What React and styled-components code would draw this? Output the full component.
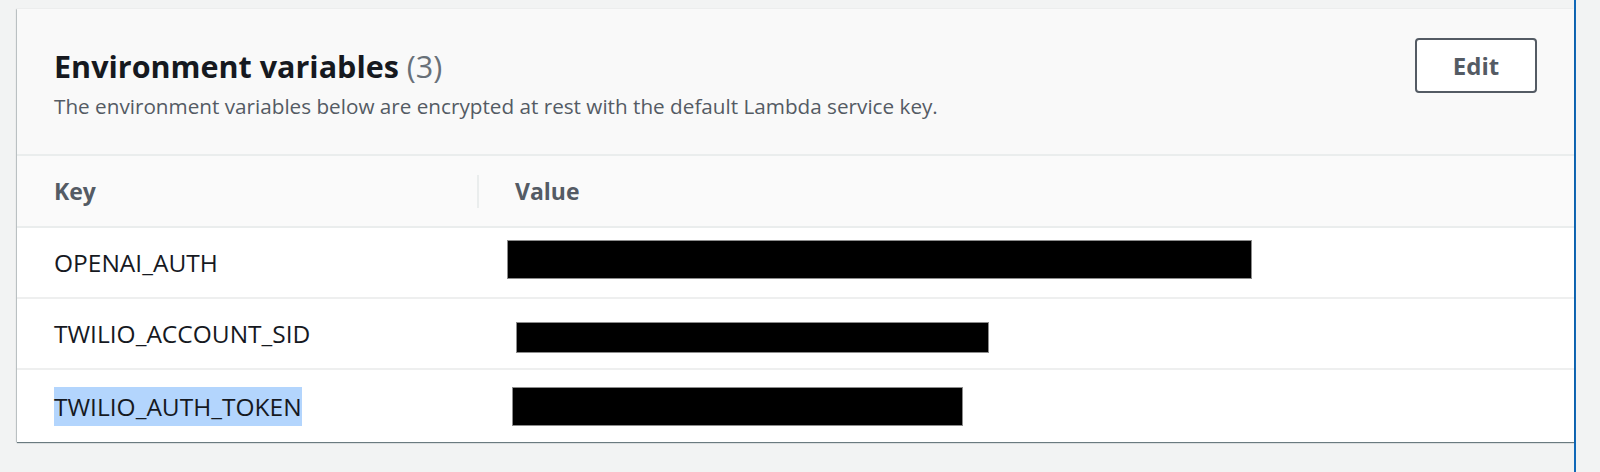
import React from 'react'
import styled, { createGlobalStyle } from 'styled-components'

const GlobalStyle = createGlobalStyle`
  html, body {
    margin: 0;
    padding: 0;
    background: #f2f3f3;
    font-family: "Open Sans", "Noto Sans", sans-serif;
  }
`

const rows = [
  { key: 'OPENAI_AUTH', bar: { left: 0, top: 12, width: 745, height: 39 } },
  { key: 'TWILIO_ACCOUNT_SID', bar: { left: 9, top: 23, width: 473, height: 31 } },
  { key: 'TWILIO_AUTH_TOKEN', bar: { left: 5, top: 17, width: 451, height: 39 }, selected: true },
]

function App() {
  return (
    <>
      <GlobalStyle />
      <Page>
        <Panel>
          <Card>
            <Header>
              <HeaderText>
                <Title>
                  Environment variables <Count>(3)</Count>
                </Title>
                <Description>
                  The environment variables below are encrypted at rest with the default Lambda service key.
                </Description>
              </HeaderText>
              <EditButton>Edit</EditButton>
            </Header>
            <Table>
              <HeadRow>
                <KeyCell>
                  <HeadLabel>Key</HeadLabel>
                </KeyCell>
                <Divider />
                <ValueCell $head>
                  <HeadLabel>Value</HeadLabel>
                </ValueCell>
              </HeadRow>
              {rows.map((r, i) => (
                <Row key={r.key} $last={i === rows.length - 1}>
                  <KeyCell>
                    <KeyText $selected={r.selected}>{r.key}</KeyText>
                  </KeyCell>
                  <ValueCell>
                    <Redacted
                      style={{
                        marginLeft: r.bar.left,
                        marginTop: r.bar.top,
                        width: r.bar.width,
                        height: r.bar.height,
                      }}
                    />
                  </ValueCell>
                </Row>
              ))}
            </Table>
          </Card>
        </Panel>
      </Page>
    </>
  )
}

export default App

const Page = styled.div`
  display: flex;
  height: 472px;
  width: 1600px;
  background: #f2f3f3;
  overflow: hidden;
`

const Panel = styled.div`
  width: 1576px;
  height: 100%;
  border-right: 2px solid #1068b8;
  padding: 9px 0 0 17px;
  box-sizing: border-box;
`

const Card = styled.div`
  background: #fff;
  box-shadow: 0 1px 1px 0 rgba(0, 28, 36, 0.55), -1px 0 1px 0 rgba(0, 28, 36, 0.15);
`

const Header = styled.div`
  display: flex;
  justify-content: space-between;
  align-items: flex-start;
  height: 147px;
  box-sizing: border-box;
  padding: 29px 37px 0 37px;
  background: #f9f9f9;
  border-bottom: 2px solid #eaeded;
`

const HeaderText = styled.div`
  display: flex;
  flex-direction: column;
  padding-top: 8px;
`

const Title = styled.h2`
  margin: 0;
  font-size: 30.5px;
  line-height: 40px;
  font-weight: 700;
  color: #16191f;
`

const Count = styled.span`
  font-weight: 400;
  color: #687078;
`

const Description = styled.p`
  margin: 6px 0 0;
  font-size: 20.7px;
  line-height: 28px;
  color: #545b64;
`

const EditButton = styled.button`
  width: 122px;
  height: 55px;
  background: #fff;
  border: 2px solid #545b64;
  border-radius: 4px;
  font-family: inherit;
  font-size: 24px;
  font-weight: 700;
  color: #545b64;
  cursor: pointer;
`

const Table = styled.div`
  display: flex;
  flex-direction: column;
`

const HeadRow = styled.div`
  display: flex;
  align-items: center;
  height: 72px;
  box-sizing: border-box;
  background: #fafafa;
  border-bottom: 2px solid #eaeded;
`

const Row = styled.div`
  display: flex;
  align-items: stretch;
  height: ${p => (p.$last ? '72px' : '71px')};
  box-sizing: border-box;
  border-bottom: ${p => (p.$last ? 'none' : '2px solid #eeefef')};
`

const KeyCell = styled.div`
  width: 460px;
  padding-left: 37px;
  box-sizing: border-box;
  display: flex;
  align-items: center;
`

const Divider = styled.div`
  width: 2px;
  height: 33px;
  background: #eaeded;
`

const ValueCell = styled.div`
  flex: 1;
  padding-left: ${p => (p.$head ? '36px' : '30px')};
  display: flex;
  align-items: ${p => (p.$head ? 'center' : 'flex-start')};
`

const HeadLabel = styled.span`
  font-size: 23px;
  font-weight: 700;
  color: #545b64;
`

const KeyText = styled.span`
  font-size: 24.5px;
  line-height: 39px;
  color: #16191f;
  background: ${p => (p.$selected ? '#b3d5fd' : 'transparent')};
`

const Redacted = styled.div`
  background: #000;
  border: 1px solid #8c8c8c;
  box-sizing: border-box;
`
